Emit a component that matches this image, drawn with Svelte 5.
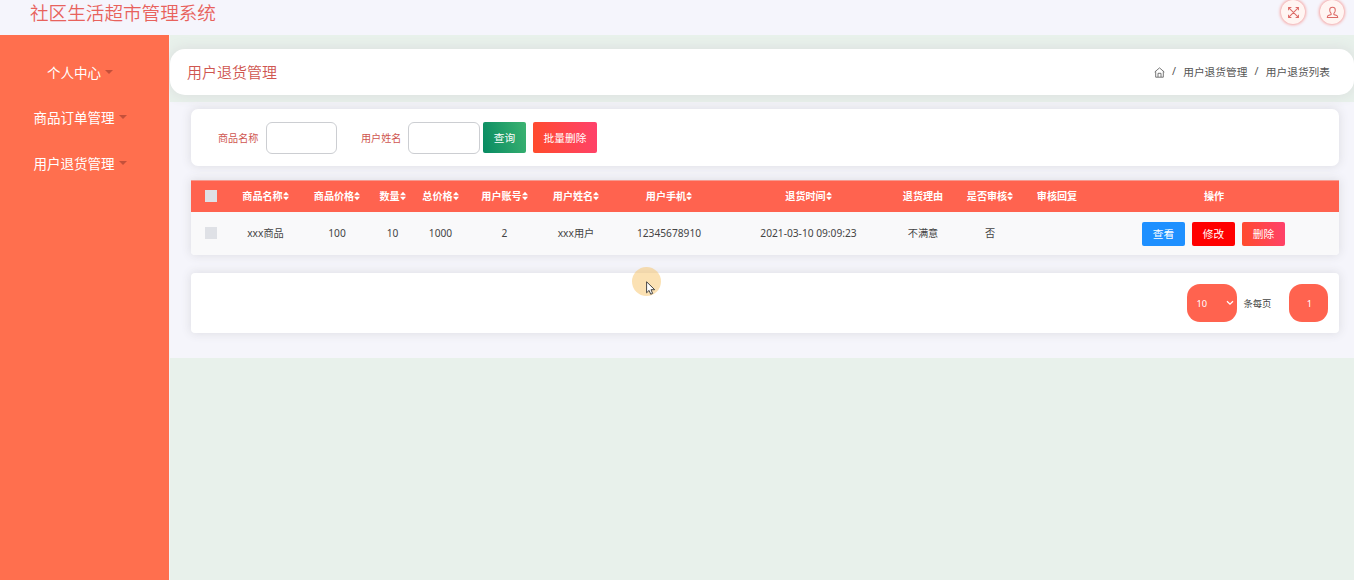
<script>
  const menus = ['个人中心', '商品订单管理', '用户退货管理'];
  const columns = [
    { label: '商品名称', sort: true, value: 'xxx商品' },
    { label: '商品价格', sort: true, value: '100' },
    { label: '数量', sort: true, value: '10' },
    { label: '总价格', sort: true, value: '1000' },
    { label: '用户账号', sort: true, value: '2' },
    { label: '用户姓名', sort: true, value: 'xxx用户' },
    { label: '用户手机', sort: true, value: '12345678910' },
    { label: '退货时间', sort: true, value: '2021-03-10 09:09:23' },
    { label: '退货理由', sort: false, value: '不满意' },
    { label: '是否审核', sort: true, value: '否' },
    { label: '审核回复', sort: false, value: '' }
  ];
</script>

<div class="page">
  <header class="top">
    <h1>社区生活超市管理系统</h1>
    <div class="tools">
      <span class="round">
        <svg width="13" height="13" viewBox="0 0 14 14"><path d="M2 2l10 10M12 2L2 12M1.700 4.700v-3h3M9.300 1.700h3v3M12.300 9.300v3h-3M4.700 12.300h-3v-3" /></svg>
      </span>
      <span class="round">
        <svg width="13" height="13" viewBox="0 0 14 14"><path d="M5.500 8C4.400 7 4 5.700 4 4.300C4 2.400 5.200 1.300 7 1.300s3 1.100 3 3C10 5.700 9.600 7 8.500 8v1.200l3.100 1.100q1 .5 1 2H1.400q0-1.500 1-2l3.100-1.100z" /></svg>
      </span>
    </div>
  </header>

  <div class="body">
    <nav class="side">
      {#each menus as item}
        <div class="menu"><span>{item}</span><i class="caret"></i></div>
      {/each}
    </nav>

    <main>
      <section class="title card">
        <h2>用户退货管理</h2>
        <div class="crumbs">
          <svg width="11" height="11" viewBox="0 0 11 11"><path d="M.7 5L5.500.9 10.300 5M1.700 4.300v5.900h7.600V4.300M4 10V6.300h3V10" /></svg>
          <span class="slash">/</span><span>用户退货管理</span><span class="slash">/</span><span>用户退货列表</span>
        </div>
      </section>

      <div class="panel">
        <section class="search card">
          <label for="goods">商品名称</label><input id="goods" type="text" />
          <label for="user" class="second">用户姓名</label><input id="user" type="text" />
          <button class="btn query">查询</button>
          <button class="btn remove">批量删除</button>
        </section>

        <section class="table card">
          <div class="row head">
            <div class="cell"><i class="box"></i></div>
            {#each columns as c}
              <div class="cell">
                <span>{c.label}</span>{#if c.sort}<svg class="sort" width="6" height="10" viewBox="0 0 6 10"><path d="M0 4.300L3 .7l3 3.600zM0 5.700h6L3 9.300z" /></svg>{/if}
              </div>
            {/each}
            <div class="cell">操作</div>
          </div>
          <div class="row data">
            <div class="cell"><i class="box"></i></div>
            {#each columns as c}
              <div class="cell">{c.value}</div>
            {/each}
            <div class="cell actions">
              <button class="btn view">查看</button>
              <button class="btn edit">修改</button>
              <button class="btn remove">删除</button>
            </div>
          </div>
        </section>

        <section class="pager card">
          <div class="size">
            <span>10</span>
            <svg width="8" height="6" viewBox="0 0 8 6"><path d="M1 1.200l3 3 3-3" /></svg>
          </div>
          <span class="per">条每页</span>
          <button class="num">1</button>
        </section>
      </div>
    </main>
  </div>

  <div class="pointer">
    <svg width="10" height="14" viewBox="0 0 10 14"><path d="M.6.8v11l2.500-2.400 1.600 3.800 1.900-.8L5 8.700h3.700z" /></svg>
  </div>
</div>

<style>
  :global(body) { margin: 0; overflow: hidden; }
  * { box-sizing: border-box; }
  .page {
    position: relative;
    width: 1354px;
    height: 580px;
    overflow: hidden;
    display: flex;
    flex-direction: column;
    background: #e8f1eb;
    color: #444;
    font-family: "Noto Sans", "Noto Sans CJK SC", sans-serif;
    font-size: 10.2px;
  }
  svg { display: block; fill: none; flex: none; }
  button, input { font-family: inherit; border: 0; padding: 0; margin: 0; }
  h1, h2 { margin: 0; font-weight: 350; font-family: "Noto Sans CJK SC", sans-serif; }

  .top {
    height: 35px;
    flex: none;
    display: flex;
    justify-content: space-between;
    align-items: flex-start;
    background: #f5f5fc;
    padding: 0 10px 0 30px;
  }
  h1 { font-size: 18.6px; line-height: 24px; color: #e8625c; }
  .tools { display: flex; gap: 15px; }
  .round {
    width: 24px;
    height: 24px;
    border-radius: 50%;
    background: #fff5f2;
    box-shadow: 0 0 3px 1px #f5a5a3;
    display: flex;
    align-items: center;
    justify-content: center;
  }
  .round svg { stroke: #dc6a66; stroke-width: 1.100; }

  .body { flex: 1; display: flex; min-height: 0; }
  .side { position: relative; z-index: 1; width: 169px; background: #ff6f4e; padding-top: 14px; flex: none; }
  .menu {
    height: 45.500px;
    display: flex;
    align-items: center;
    justify-content: center;
    gap: 4px;
    padding-right: 9px;
    color: #fff;
    font: 13.500px "Noto Sans CJK SC", sans-serif;
  }
  .caret { border: 4px solid transparent; border-top-color: #c4503a; border-bottom: 0; }

  main { flex: 1; min-width: 0; padding-top: 14px; border-left: 1px solid #f3f4f4; }
  .card { background: #fff; box-shadow: 0 0 10px 1px #dfdfe5; }
  .title {
    position: relative;
    height: 46px;
    border-radius: 15px;
    display: flex;
    align-items: center;
    justify-content: space-between;
    padding: 0 24px 2px 17px;
    box-shadow: 0 0 12px 2px #dde1e0;
  }
  h2 { font-size: 15px; color: #cf5650; }
  .crumbs { display: flex; align-items: center; font-size: 10.700px; color: #555; }
  .crumbs svg { stroke: #666; stroke-width: .9; margin-top: 2px; }
  .slash { width: 18.500px; text-align: center; }

  .panel {
    margin-top: 7px;
    height: 256px;
    background: #f5f5fb;
    padding: 7px 15px 0 21px;
  }
  .search {
    height: 57px;
    border-radius: 7px;
    display: flex;
    align-items: center;
    padding-left: 27px;
  }
  label { color: #cf5650; font: 10.100px "Noto Sans CJK SC", sans-serif; width: 47.500px; padding-bottom: 1px; }
  .second { margin-left: 24px; width: 47px; }
  input {
    width: 71.500px;
    height: 32px;
    border: 1px solid #ccced2;
    border-radius: 6px;
    background: #fff;
  }
  .btn {
    color: #fff;
    font: 10.700px "Noto Sans CJK SC", sans-serif;
    border-radius: 2px;
    width: 43px;
    height: 24px;
  }
  .search .btn { height: 31px; margin-left: 3.500px; }
  .search .remove { width: 64px; margin-left: 7px; }
  .query { background: linear-gradient(75deg, #078a62, #3cb371); }
  .remove { background: linear-gradient(80deg, #ff4b2b, #ff416c); }
  .view { background: #1e90ff; }
  .edit { background: #f00; }

  .table { margin-top: 14px; height: 75px; border-radius: 0 0 4px 4px; }
  .row {
    display: grid;
    grid-template-columns: 39px 71px 72px 39px 57px 71px 72px 114px 165px 64px 70px 64px 250px;
  }
  .cell { display: flex; align-items: center; justify-content: center; white-space: nowrap; }
  .head {
    height: 32px;
    padding-bottom: 2px;
    background: #ff634f;
    border-top: 1px solid #f69a90;
    color: #fff;
    font: bold 10.100px "Noto Sans CJK SC", sans-serif;
  }
  .sort { fill: #fff; }
  .data { height: 43px; padding-bottom: 2px; background: #f9f9fa; border-radius: 0 0 4px 4px; }
  .box { width: 12px; height: 12px; background: #dfe1e6; }
  .actions { gap: 7px; padding: 2px 1px 0 0; }

  .pager {
    margin-top: 18px;
    height: 60px;
    border-radius: 4px;
    display: flex;
    align-items: center;
    justify-content: flex-end;
    padding-right: 11px;
  }
  .size {
    width: 50px;
    height: 38px;
    border-radius: 13px;
    background: #ff634f;
    color: #fff;
    display: flex;
    align-items: center;
    justify-content: space-between;
    padding: 0 3px 0 10px;
    font-size: 9.300px;
  }
  .size svg { stroke: #fff; stroke-width: 1.300; }
  .per { margin: 0 17.500px 0 7px; width: 28px; font-size: 9.300px; white-space: nowrap; }
  .num {
    width: 39px;
    height: 38px;
    border-radius: 13px;
    background: #ff634f;
    color: #fff;
    font-size: 9.300px;
    padding-left: 2px;
  }

  .pointer {
    position: absolute;
    left: 632px;
    top: 266.500px;
    width: 29px;
    height: 29px;
    border-radius: 50%;
    background: rgba(248, 195, 103, .5);
    padding: 14px 0 0 14px;
  }
  .pointer svg { fill: #fff; stroke: #333; stroke-width: .9; }
</style>
